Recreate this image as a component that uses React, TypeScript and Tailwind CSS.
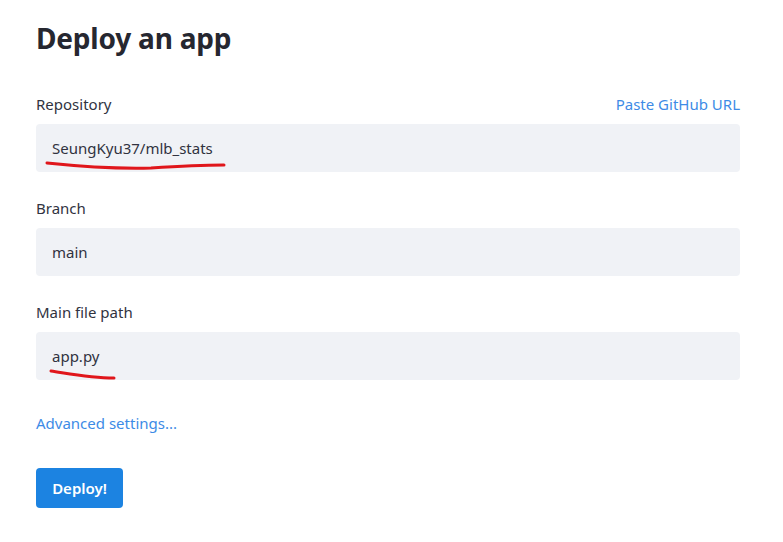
import React from "react";

const font = { fontFamily: '"Noto Sans", "Open Sans", sans-serif' };

function Field({ label, value, right, underline }: { label: string; value: string; right?: string; underline?: React.ReactNode }) {
  return (
    <div className="flex flex-col">
      <div className="flex items-center justify-between h-[22px] text-[15px] text-[#31333f]">
        <span>{label}</span>
        {right && <span className="text-[#3d8be6]">{right}</span>}
      </div>
      <div className="relative mt-[9px] h-[48px] rounded-[4px] bg-[#f0f2f6] flex items-center pl-[16px] text-[15px] text-[#31333f]">
        {value}
        {underline}
      </div>
    </div>
  );
}

export default function App() {
  return (
    <div className="w-[783px] h-[542px] bg-white pl-[36px] pr-[43px] pt-[18px]" style={font}>
      <h1 className="text-[28px] font-bold text-[#262730] leading-[40px] tracking-[-0.2px]">Deploy an app</h1>
      <div className="mt-[35px] flex flex-col gap-[25px]">
        <Field
          label="Repository"
          value="SeungKyu37/mlb_stats"
          right="Paste GitHub URL"
          underline={
            <svg className="absolute left-0 top-0 pointer-events-none" width="260" height="48" viewBox="0 0 260 48">
              <path d="M11 39 C 40 42, 80 45, 115 44 C 145 42, 170 41, 188 41" stroke="#e0161b" strokeWidth="3" fill="none" strokeLinecap="round" />
            </svg>
          }
        />
        <Field label="Branch" value="main" />
        <Field
          label="Main file path"
          value="app.py"
          underline={
            <svg className="absolute left-0 top-0 pointer-events-none" width="120" height="48" viewBox="0 0 120 48">
              <path d="M15 39 C 35 42, 55 46, 78 46" stroke="#e0161b" strokeWidth="3" fill="none" strokeLinecap="round" />
            </svg>
          }
        />
      </div>
      <div className="mt-[32px] text-[15px] text-[#3d8be6] leading-[22px]">Advanced settings...</div>
      <button className="mt-[34px] h-[40px] w-[87px] rounded-[4px] bg-[#1c83e1] text-white text-[15px] font-semibold">Deploy!</button>
    </div>
  );
}
